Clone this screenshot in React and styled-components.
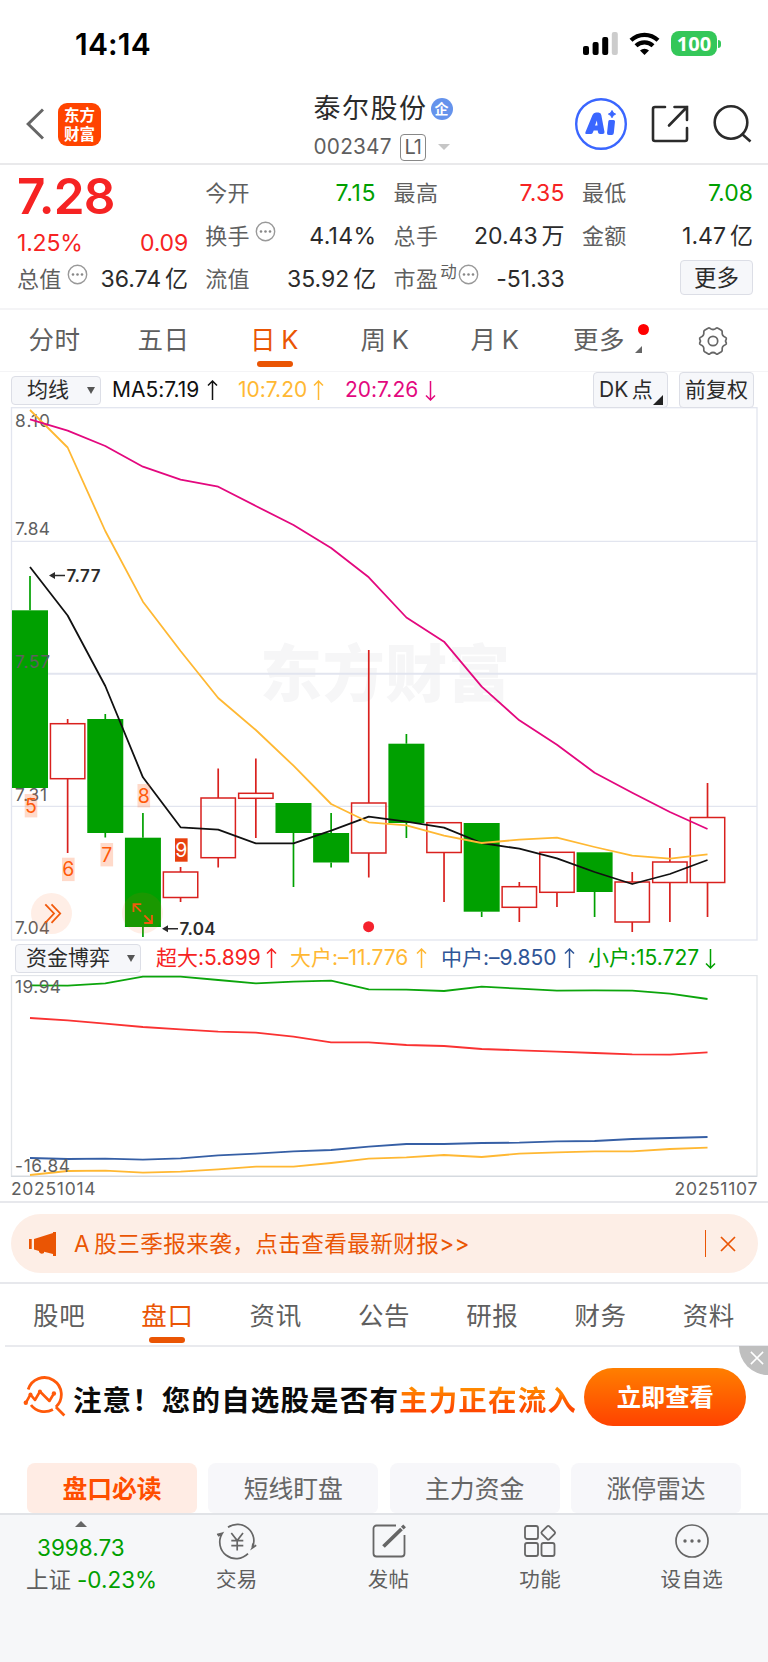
import React from 'react';
import styled, { createGlobalStyle } from 'styled-components';

const RED = '#f62323';
const GREEN = '#00a000';
const ORANGE = '#ea5504';
const YELLOW = '#ffb833';
const BLUE = '#2f5597';
const PINK = '#e3087e';
const GRAY = '#5f5f5f';
const DARK = '#2b2b2b';

const GlobalStyle = createGlobalStyle`
  * {
    box-sizing: border-box;
  }

  body {
    margin: 0;
    background: #fff;
    font-family: Inter, 'Noto Sans CJK SC', sans-serif;
    font-feature-settings: 'calt' 0;
    line-height: 1.2;
    word-spacing: -2.5px;
    color: ${DARK};
  }
`;

const Page = styled.div`
  width: 768px;
  height: 1662px;
  display: flex;
  flex-direction: column;
  overflow: hidden;
  white-space: nowrap;
`;

/** Status bar */
const StatusBar = styled.div`
  height: 84px;
  padding: 3px 48px 0 75px;
  display: flex;
  align-items: center;
  justify-content: space-between;
`;

const Clock = styled.span`
  font-size: 30px;
  font-weight: 600;
  letter-spacing: 0.2px;
  color: #000;
`;

const StatusIcons = styled.div`
  display: flex;
  align-items: center;
`;

const Battery = styled.span`
  width: 46px;
  height: 25px;
  margin-left: 11px;
  border-radius: 8px;
  background: #34c759;
  color: #fff;
  font: 700 20px/25px 'Open Sans', sans-serif;
  text-align: center;
`;

const BatteryTip = styled.span`
  width: 3px;
  height: 8px;
  margin: 0 -1px 0 1px;
  border-radius: 0 3px 3px 0;
  background: #34c759;
`;

/** Header */
const Header = styled.header`
  height: 81px;
  padding: 0 16px 0 26px;
  display: grid;
  grid-template-columns: 287.5px 1fr auto;
  align-items: center;
  border-bottom: 2px solid #e9e9eb;
`;

const HeaderLeft = styled.div`
  display: flex;
  align-items: center;
  gap: 14px;
`;

const HeaderTitle = styled.div`
  margin-top: 4px;
`;

const Logo = styled.div`
  width: 43px;
  height: 43px;
  padding-top: 2px;
  border-radius: 9px;
  background: #ff4400;
  color: #fff;
  font: 700 15.5px/19px 'Noto Sans CJK SC', sans-serif;
  text-align: center;
`;

const Title = styled.div`
  display: flex;
  align-items: center;
  height: 42px;
  font-size: 27px;
  letter-spacing: 1.5px;
`;

const Verified = styled.span`
  width: 22px;
  height: 22px;
  margin-left: 3px;
  border-radius: 50%;
  background: #6593ec;
  color: #fff;
  font-size: 14px;
  font-weight: 700;
  line-height: 22px;
  letter-spacing: 0;
  text-align: center;
`;

const SubTitle = styled.div`
  height: 34px;
  display: flex;
  align-items: center;
  font-size: 20.8px;
  letter-spacing: 0.2px;
  color: ${GRAY};
`;

const Level = styled.span`
  width: 26px;
  height: 27px;
  margin: 0 12px 0 8px;
  border: 1.5px solid #888;
  border-radius: 4px;
  font-size: 20px;
  line-height: 25px;
  letter-spacing: -1px;
  text-align: center;
`;

const Caret = styled.i`
  border: ${p => p.$size || 6}px solid transparent;
  border-top: ${p => p.$height || 6}px solid ${p => p.$color || '#c6c6c6'};
  border-bottom: 0;
`;

const HeaderRight = styled.div`
  display: flex;
  align-items: center;
  gap: 23.5px;
`;

/** Quote panel */
const Quote = styled.section`
  height: 145px;
  padding: 7px 15px 0 17px;
  display: grid;
  grid-template-columns: 171px 171px 171px 171px;
  column-gap: 17.3px;
  border-bottom: 2px solid #f4f4f6;
`;

const QuoteColumn = styled.div`
  display: flex;
  flex-direction: column;
`;

const Price = styled.div`
  height: 50px;
  color: ${RED};
  font-size: 49.5px;
  font-weight: 600;
  line-height: 48px;
  letter-spacing: -0.7px;
`;

const Stat = styled.div`
  height: ${p => p.$height || 43}px;
  display: flex;
  align-items: center;
  justify-content: space-between;
  font-size: 23px;
  letter-spacing: ${p => p.$spacing || 0}px;
  color: ${p => p.$color || DARK};
`;

const StatLabel = styled.span`
  display: flex;
  align-items: center;
  font-size: 22px;
  letter-spacing: 0.3px;
  color: ${GRAY};
`;

const Sup = styled.span`
  margin: -14px 0 0 2px;
  font-size: 16.5px;
`;

const HintSvg = styled.svg`
  margin: -10px 0 0 ${p => p.$gap}px;
`;

const MoreButton = styled.button`
  width: 73px;
  height: 35px;
  margin: -4px 0 0 auto;
  padding: 0;
  border: 1.5px solid #dcdee6;
  border-radius: 4px;
  background: #f6f7fa;
  color: ${DARK};
  font: 22.5px/32px Inter, 'Noto Sans CJK SC', sans-serif;
`;

/** Period tabs */
const Periods = styled.nav`
  height: 62px;
  display: grid;
  grid-template-columns: 109px 109px 113px 108px 112px 105px 114px;
  border-bottom: 1px solid #f4f4f6;
`;

const Tab = styled.div`
  position: relative;
  display: flex;
  align-items: center;
  justify-content: center;
  padding: ${p => p.$drop || 0}px ${p => p.$shift || 0}px 0 0;
  font-size: 25.5px;
  letter-spacing: 0.6px;
  color: ${p => (p.$active ? ORANGE : GRAY)};

  &::after {
    content: '';
    display: ${p => (p.$active ? 'block' : 'none')};
    position: absolute;
    left: calc(50% - 18px);
    bottom: ${p => p.$bar || 4}px;
    width: 36px;
    height: 6px;
    border-radius: 3px;
    background: ${ORANGE};
  }
`;

const RedDot = styled.i`
  position: absolute;
  top: 14px;
  right: 7px;
  width: 11px;
  height: 11px;
  border-radius: 50%;
  background: #ff0000;
`;

const Corner = styled.i`
  position: absolute;
  right: ${p => p.$right}px;
  bottom: ${p => p.$bottom}px;
  border-left: ${p => p.$size}px solid transparent;
  border-bottom: ${p => p.$size}px solid ${p => p.$color};
`;

/** Indicator bars above both charts */
const Indicators = styled.div`
  height: ${p => p.$height}px;
  padding: ${p => p.$drop || 0}px 14px 0 ${p => p.$left}px;
  display: flex;
  align-items: center;
  font-size: 21px;
`;

const Select = styled.div`
  width: ${p => p.$width}px;
  height: 29px;
  padding: 0 5px 0 ${p => p.$pad}px;
  display: flex;
  align-items: center;
  justify-content: space-between;
  border: 1.5px solid #dcdee6;
  border-radius: 4px;
  background: #f6f7fa;
  font-size: 21px;
`;

const Legend = styled.span`
  display: flex;
  align-items: center;
  width: ${p => p.$width}px;
  margin-left: ${p => p.$gap}px;
  color: ${p => p.$color};

  svg {
    margin-left: auto;
  }
`;

const ToolButton = styled.div`
  position: relative;
  width: 75px;
  height: 36px;
  margin-left: ${p => p.$gap};
  padding-left: 5px;
  border: 1.5px solid #dcdee6;
  border-radius: 4px;
  background: #f6f7fa;
  font-size: 21px;
  line-height: 34px;
`;

const Chart = styled.svg`
  display: block;
  flex: none;
`;

const Dates = styled.div`
  height: 26px;
  padding: 0 10px 2px 11px;
  display: flex;
  align-items: center;
  justify-content: space-between;
  border-bottom: 2px solid #e7e8ec;
  font-size: 17.5px;
  letter-spacing: 0.7px;
  color: ${GRAY};
`;

/** Notice */
const NoticeWrap = styled.div`
  height: 81px;
  padding: 11px 10px 0 11px;
  border-bottom: 2px solid #e7e8ec;
`;

const Notice = styled.div`
  height: 59px;
  padding: 0 22px 0 18px;
  display: flex;
  align-items: center;
  border-radius: 30px;
  background: #fdeee6;
  color: ${ORANGE};
  font-size: 22.6px;
`;

const NoticeText = styled.span`
  margin-left: 18px;
  flex: 1;
  letter-spacing: 0.4px;
`;

const Divider = styled.i`
  width: 1.5px;
  height: 27px;
  margin-right: 14px;
  background: ${ORANGE};
`;

const Sections = styled.nav`
  height: 63px;
  margin-left: 5px;
  padding-right: 5px;
  display: grid;
  grid-template-columns: repeat(7, 1fr);
  border-bottom: 2px solid #e9eaee;
`;

/** Banner */
const Banner = styled.div`
  position: relative;
  height: 106px;
  padding: 0 22px 6px 23px;
  display: flex;
  align-items: center;
`;

const BannerText = styled.div`
  width: 513px;
  margin-left: 6px;
  padding-top: 3px;
  color: #0b0b0b;
  font: 700 28.5px/60px 'Noto Sans CJK SC', sans-serif;
  letter-spacing: 1.15px;
`;

const Accent = styled.span`
  background: linear-gradient(180deg, #ff8a00 25%, #ff4800 75%);
  background-clip: text;
  -webkit-background-clip: text;
  color: transparent;
`;

const BannerButton = styled.div`
  width: 162px;
  height: 58px;
  border-radius: 29px;
  background: linear-gradient(180deg, #ff7f00, #ff4200);
  color: #fff;
  font: 700 24.3px/55px 'Noto Sans CJK SC', sans-serif;
  text-align: center;
`;

const BannerClose = styled.div`
  position: absolute;
  top: -1px;
  right: 0;
  width: 29px;
  height: 29px;
  padding: 4px 0 0 11px;
  border-bottom-left-radius: 29px;
  background: #bfbfbf;
`;

const Pills = styled.div`
  height: 60px;
  padding: 10px 27px 0;
  display: grid;
  grid-template-columns: repeat(4, 1fr);
  gap: 11.3px;
`;

const Pill = styled.div`
  height: 50px;
  border-radius: 8px 8px 6px 6px;
  background: ${p => (p.$active ? '#ffece4' : '#f7f7fa')};
  color: ${p => (p.$active ? '#ff4e00' : '#666')};
  font-size: 24.8px;
  font-weight: ${p => (p.$active ? 700 : 400)};
  line-height: 53px;
  text-align: center;
`;

/** Bottom bar */
const BottomBar = styled.footer`
  flex: 1;
  padding-left: 8px;
  display: grid;
  grid-template-columns: 153px repeat(4, 151.7px);
  border-top: 2px solid #e1e3e7;
  background: #f6f7f9;
`;

const BottomItem = styled.div`
  display: flex;
  flex-direction: column;
  align-items: center;
  padding-top: 8px;
  font-size: 20.5px;
  letter-spacing: 0.4px;
  color: ${GRAY};

  svg {
    margin-bottom: 9px;
    overflow: visible;
  }
`;

const MarketIndex = styled.div`
  padding-top: 6px;
  display: flex;
  flex-direction: column;
  font-size: 22.5px;
  line-height: 31.5px;
  color: ${GRAY};
`;

const IndexArrow = styled.i`
  width: 0;
  margin: 0 0 5px 67px;
  border: 6px solid transparent;
  border-bottom-color: #666;
  border-top: 0;
`;

const IndexValue = styled.span`
  margin-left: 29px;
  color: ${GREEN};
`;

const IndexChange = styled.span`
  margin-left: 18px;

  b {
    margin-left: 6px;
    font-weight: 400;
    color: ${GREEN};
  }
`;

const Hint = ({ gap = 5 }) => (
  <HintSvg $gap={gap} width="21" height="21" viewBox="0 0 21 21">
    <circle cx="10.5" cy="10.5" r="9.2" fill="none" stroke="#999" strokeWidth="1.4" />
    {[6, 10.5, 15].map(x => (
      <circle key={x} cx={x} cy="10.5" r="1.3" fill="#888" />
    ))}
  </HintSvg>
);

const Arrow = ({ down }) => (
  <svg width="11" height="21" viewBox="0 0 11 21" fill="none" stroke="currentColor" strokeWidth="1.5">
    <path d={down ? 'M5.5 1v19M1 15.5 5.5 20l4.5-4.5' : 'M5.5 20V1M1 5.5 5.5 1 10 5.5'} />
  </svg>
);

/** Chart data, one entry per trading day */
const STEP = 37.64;
const dayX = i => 30 + i * STEP;

// high, body top, body bottom, low, rising
const CANDLES = [
  [576, 610.3, 788, 788, 0],
  [719, 723.7, 778.7, 853, 1],
  [714, 719, 833, 837.5, 0],
  [813, 837.7, 927, 937, 0],
  [867, 872, 897.5, 902, 1],
  [768.5, 798, 857.7, 867.5, 1],
  [758.5, 793.3, 798.3, 838, 1],
  [803, 803, 833, 887, 0],
  [813, 833, 862.5, 867.5, 0],
  [650, 803, 853, 877.5, 1],
  [734, 743.7, 823, 838, 0],
  [822.7, 822.7, 852.5, 902, 1],
  [823, 823, 911.7, 917, 0],
  [882, 886.7, 907.3, 922, 1],
  [852.3, 852.3, 892.3, 907, 1],
  [852.3, 852.3, 892, 917, 0],
  [872, 882, 922, 932, 1],
  [848, 862, 882.5, 922, 1],
  [783, 817.5, 882.5, 917, 1],
];

const MA5 = [567, 615.5, 686, 777.3, 827.3, 829.7, 843.3, 843.3, 830.7, 816.7, 821.7, 827.7, 843, 848.7, 858.3, 872, 884, 874, 860];
const MA10 = [410, 447.5, 531, 601.7, 651, 698, 730, 765.7, 804, 822.3, 825.3, 835.7, 843, 839.7, 837.7, 847, 855.7, 858.7, 854.3];
const MA20 = [419.3, 430.7, 446, 466.7, 479.7, 486.7, 506, 525, 548, 577.3, 617.5, 641.7, 686.7, 720.3, 744.7, 772.7, 792.7, 812, 829];

const FLOW_SMALL = [985.3, 985.7, 983.3, 976.7, 976.7, 980, 983.3, 981.7, 980.7, 989.3, 989.7, 991, 986.7, 988.7, 990.7, 990.3, 990.7, 993.7, 999];
const FLOW_SUPER = [1018, 1020.3, 1023.7, 1027, 1029.3, 1031.7, 1032.7, 1036.7, 1042.3, 1042.3, 1045, 1046, 1049, 1050.3, 1051.7, 1053, 1054.3, 1054.7, 1052.3];
const FLOW_MIDDLE = [1158, 1159, 1158.7, 1159.7, 1158.3, 1155.3, 1153.7, 1151.3, 1150, 1146.7, 1144, 1144, 1143, 1142.7, 1141.3, 1141, 1139, 1138, 1137];
const FLOW_LARGE = [1175, 1171, 1170.7, 1172.7, 1171.7, 1169.3, 1166.7, 1166.7, 1163, 1158.7, 1157.3, 1155, 1157, 1153.7, 1152.3, 1151.3, 1151.3, 1149, 1147.7];

// label, x, y of each nine-turn mark
const MARKS = [
  ['5', 24.7, 794],
  ['6', 62, 857.7],
  ['7', 100.5, 843],
  ['8', 137.5, 784],
  ['9', 175, 838.3],
];

const Line = ({ data, color, width = 1.8 }) => (
  <polyline
    points={data.map((y, i) => `${dayX(i)},${y}`).join(' ')}
    fill="none"
    stroke={color}
    strokeWidth={width}
    strokeLinejoin="round"
  />
);

const Candle = ({ x, data: [high, top, bottom, low, rising] }) => {
  const color = rising ? '#d9211e' : GREEN;
  return (
    <g stroke={color} strokeWidth="1.7">
      {high < top && <path d={`M${x} ${high}V${top}`} />}
      {low > bottom && <path d={`M${x} ${bottom}V${low}`} />}
      {rising ? (
        <rect x={x - 17.2} y={top} width="34.4" height={bottom - top} fill="none" strokeWidth="1.5" />
      ) : (
        <rect x={x - 18} y={top} width="36" height={bottom - top} fill={color} stroke="none" />
      )}
    </g>
  );
};

const AxisLabel = ({ y, width = 35, children }) => (
  <text x="15" y={y} fontSize="17.3" fill={GRAY} textLength={width}>
    {children}
  </text>
);

const PriceChart = () => (
  <Chart width="768" height="534" viewBox="0 407 768 534">
    <text x="260" y="697" fontSize="62" fontWeight="900" fill="#f6f6f7" textLength="250">
      东方财富
    </text>
    <g fill="none" stroke="#e2e5ef" strokeWidth="1.3">
      <rect x="11.5" y="407.7" width="745.5" height="532.3" />
      <path d="M11 541.3H757M11 806.3H757" />
      <path d="M11 673.7H757" strokeWidth="2" />
    </g>
    {CANDLES.map((c, i) => (
      <Candle key={i} x={dayX(i)} data={c} />
    ))}
    <AxisLabel y="427">8.10</AxisLabel>
    <AxisLabel y="534.5">7.84</AxisLabel>
    <AxisLabel y="667.5">7.57</AxisLabel>
    <AxisLabel y="800.5" width="32">7.31</AxisLabel>
    <AxisLabel y="933.5">7.04</AxisLabel>
    <Line data={MA5} color="#111" />
    <Line data={MA10} color={YELLOW} />
    <Line data={MA20} color={PINK} />
    {MARKS.map(([label, x, y]) => (
      <g key={label}>
        <rect
          x={x}
          y={y}
          width="12.6"
          height="23.4"
          fill={label === '9' ? '#e8400f' : '#ff6a2b'}
          fillOpacity={label === '9' ? 1 : 0.25}
        />
        <text x={x + 6.3} y={y + 18.6} fontSize="19.5" textAnchor="middle" fill={label === '9' ? '#fff' : '#ff5a0a'}>
          {label}
        </text>
      </g>
    ))}
    <g fill="none" stroke={DARK} strokeWidth="1.6">
      <path d="M51 575.5H65M164 928.7H178" />
      <path d="M49 575.5l6-3.5v7zM162 928.7l6-3.5v7z" fill={DARK} stroke="none" />
    </g>
    <g fontSize="17" fontWeight="600" fill={DARK}>
      <text x="66.5" y="581.6" textLength="34">
        7.77
      </text>
      <text x="179.5" y="935" textLength="36">
        7.04
      </text>
    </g>
    <circle cx="368.6" cy="926.7" r="5.5" fill="#f5222d" />
    <circle cx="51.5" cy="913.5" r="20.5" fill="#ff5a0a" fillOpacity="0.1" />
    <circle cx="142.5" cy="913" r="20.5" fill="#ff5a0a" fillOpacity="0.1" />
    <g fill="none" stroke="#f25a0c" strokeWidth="1.8">
      <path d="M45.3 904.3 54 913.5l-8.7 9.3M51.5 904.3l8.7 9.2-8.7 9.3" />
      <path d="M133.5 912v-7.8h7.8M133.5 904.2l7.5 7.5M152 915v8h-7.8M152 923l-7.6-7.6" />
    </g>
  </Chart>
);

const FlowChart = () => (
  <Chart width="768" height="202" viewBox="0 975 768 202">
    <rect x="11.5" y="975.5" width="745.5" height="200.7" fill="none" stroke="#e2e5e9" strokeWidth="1.3" />
    <path d="M11 1176.4H757" stroke="#d5dae0" strokeWidth="1.3" />
    <Line data={FLOW_SMALL} color="#0ca50c" />
    <Line data={FLOW_SUPER} color="#fa3232" />
    <Line data={FLOW_MIDDLE} color="#365fa5" />
    <Line data={FLOW_LARGE} color={YELLOW} />
    <AxisLabel y="993" width="46">
      19.94
    </AxisLabel>
    <AxisLabel y="1172" width="55">
      -16.84
    </AxisLabel>
  </Chart>
);

const StatusGlyphs = () => (
  <svg width="77" height="26" viewBox="0 0 77 26">
    <rect x="0" y="15" width="6" height="9" rx="2" />
    <rect x="9.6" y="11" width="6" height="13" rx="2" />
    <rect x="19.2" y="6" width="6" height="18" rx="2" />
    <rect x="28.8" y="1" width="6" height="23" rx="2" fill="#ccc" />
    <g fill="none" stroke="#000" strokeWidth="4.2">
      <path d="M48 9.3a19.5 19.5 0 0 1 27 0" />
      <path d="M53 14.8a12.3 12.3 0 0 1 17 0" />
    </g>
    <path d="M57 19.6a6.7 6.7 0 0 1 9 0L61.5 24z" />
  </svg>
);

const BackIcon = () => (
  <svg width="18" height="32" viewBox="0 0 18 32" fill="none" stroke="#666" strokeWidth="3">
    <path d="M17 1.5 2.2 16 17 30.5" />
  </svg>
);

const AiIcon = () => (
  <svg width="52" height="52" viewBox="0 0 52 52" fill="#3a66ff">
    <circle cx="26" cy="26" r="24.8" fill="none" stroke="#3a66ff" strokeWidth="2.4" />
    <path
      d="M10.5 34 17.5 17q1-2.500 3.500-2.500h2.500q2.500 0 2.800 2.500L29.500 34q.3 2-2 2h-2.500q-1.700 0-2-1.700l-.3-1.800h-4l-.8 2q-.6 1.500-2.200 1.500h-4q-2 0-1.200-2zM20 27.500h2.500l-.6-5z"
      fillRule="evenodd"
    />
    <path d="M34.5 22h4q1.600 0 1.500 1.500L38.800 35q-.2 2-2 2h-3q-2 0-1.800-2L33.300 23.500q.1-1.500 1.200-1.500z" />
    <path d="M37 12.500q1 2.900 3.600 3.600-2.600.8-3.600 3.600-1-2.800-3.600-3.600 2.600-.7 3.600-3.600z" stroke="#3a66ff" />
  </svg>
);

const ShareIcon = () => (
  <svg width="38" height="38" viewBox="0 0 38 38" fill="none" stroke="#2b2b2b" strokeWidth="2.6" strokeLinecap="round">
    <path d="M14 2H4a2 2 0 0 0-2 2v30a2 2 0 0 0 2 2h30a2 2 0 0 0 2-2V23M23.5 2H36v13M36 2 18 20.5" />
  </svg>
);

const SearchIcon = () => (
  <svg width="40" height="40" viewBox="0 0 40 40" fill="none" stroke="#2b2b2b" strokeWidth="2.6">
    <circle cx="19" cy="18.5" r="16.3" />
    <path d="M30 30 38.5 37.5" />
  </svg>
);

const GearIcon = () => (
  <svg width="30" height="30" viewBox="0 0 30 30" fill="none" stroke="#666" strokeWidth="1.7" strokeLinejoin="round">
    <path d="M10 2.3Q11 1.6 12 2.3Q15 4.7 18 2.3Q19 1.6 20 2.3L23.4 4.3Q24.4 5 24.2 6.2Q23.7 10 27.3 11.3Q28.8 12 28.3 13.2Q26.8 15 28.3 16.8Q28.8 18 27.3 18.7Q23.7 20 24.2 23.8Q24.4 25 23.4 25.7L20 27.7Q19 28.4 18 27.7Q15 25.3 12 27.7Q11 28.4 10 27.7L6.6 25.7Q5.6 25 5.8 23.8Q6.3 20 2.7 18.7Q1.2 18 1.7 16.8Q3.2 15 1.7 13.2Q1.2 12 2.7 11.3Q6.3 10 5.8 6.2Q5.6 5 6.6 4.3Z" />
    <circle cx="15" cy="15" r="4.7" />
  </svg>
);

const HornIcon = () => (
  <svg width="27" height="24" viewBox="0 0 27 24" fill={ORANGE}>
    <path d="M0 7h2.7v10H0zM5 7 24 1V0h3v24h-3v-2l-9-2.3V21q-3 2-5-1v-1l-5-1.5z" />
  </svg>
);

const CrossIcon = ({ size = 16, color = ORANGE }) => (
  <svg width={size} height={size} viewBox="0 0 16 16" stroke={color} strokeWidth="1.7">
    <path d="M1 1l14 14M15 1 1 15" />
  </svg>
);

const ScanIcon = () => (
  <svg width="44" height="42" viewBox="0 0 44 42" fill="none" stroke="#ff5a0a" strokeWidth="2.8">
    <path d="M5.2 13.5A17 17 0 1 1 33 31M30 33.5A17 17 0 0 1 8 29M33 31l8.5 8.5" />
    <path d="M2.8 26.8 7.5 18.5 12 24 17 15.5 26.5 25 31 17.5" strokeWidth="2.6" strokeLinejoin="round" />
    <g fill="#ff5a0a" stroke="none">
      <circle cx="2.8" cy="26.8" r="2.2" />
      <circle cx="7.5" cy="18.5" r="2" />
      <circle cx="17" cy="15.5" r="2" />
      <circle cx="31" cy="17.5" r="2.2" />
    </g>
  </svg>
);

const TradeIcon = () => (
  <svg width="42" height="36" viewBox="-1 0 42 36" fill="none" stroke="#666" strokeWidth="1.7">
    <path d="M11 4.2A16.5 16.5 0 0 1 35.2 25L39.2 22.3M35.2 25 36 20.5" />
    <path d="M31 30.7A16.5 16.5 0 0 1 5 10.8L1 13M0 11.5 6 10.2" />
    <path d="M14.3 10l5.9 7.5L26 10M20.2 17.5V27.5M14.3 17.7h12M14.3 22.7h12" />
  </svg>
);

const PostIcon = () => (
  <svg width="36" height="36" viewBox="0 0 36 36" fill="none" stroke="#666" strokeWidth="1.8">
    <path d="M25 2.5H5.5a3 3 0 0 0-3 3v25a3 3 0 0 0 3 3h25a3 3 0 0 0 3-3V12" />
    <path d="M12.5 23.5 30.5 6M31.3 5.2l2.3-2.3" strokeWidth="3.8" />
  </svg>
);

const GridIcon = () => (
  <svg width="34" height="36" viewBox="0 0 34 36" fill="none" stroke="#666" strokeWidth="1.8">
    <rect x="2" y="3" width="13" height="13" rx="2" />
    <rect x="2" y="20" width="13" height="13" rx="2" />
    <rect x="18.5" y="20" width="13" height="13" rx="2" />
    <rect x="20" y="4.5" width="10.5" height="10.5" rx="1.5" transform="rotate(45 25.25 9.75)" />
  </svg>
);

const DotsIcon = () => (
  <svg width="36" height="36" viewBox="0 0 36 36">
    <circle cx="18" cy="18" r="16" fill="none" stroke="#666" strokeWidth="1.7" />
    {[11, 18, 25].map(x => (
      <circle key={x} cx={x} cy="18" r="1.7" fill="#666" />
    ))}
  </svg>
);

const SECTIONS = ['股吧', '盘口', '资讯', '公告', '研报', '财务', '资料'];
const PILLS = ['盘口必读', '短线盯盘', '主力资金', '涨停雷达'];

const App = () => (
  <Page>
    <GlobalStyle />

    <StatusBar>
      <Clock>14:14</Clock>
      <StatusIcons>
        <StatusGlyphs />
        <Battery>100</Battery>
        <BatteryTip />
      </StatusIcons>
    </StatusBar>

    <Header>
      <HeaderLeft>
        <BackIcon />
        <Logo>
          东方
          <br />
          财富
        </Logo>
      </HeaderLeft>
      <HeaderTitle>
        <Title>
          泰尔股份<Verified>企</Verified>
        </Title>
        <SubTitle>
          002347<Level>L1</Level>
          <Caret />
        </SubTitle>
      </HeaderTitle>
      <HeaderRight>
        <AiIcon />
        <ShareIcon />
        <SearchIcon />
      </HeaderRight>
    </Header>

    <Quote>
      <QuoteColumn>
        <Price>7.28</Price>
        <Stat $height={43} $color={RED} $spacing={-0.2}>
          <span>1.25%</span>
          <span>0.09</span>
        </Stat>
        <Stat $height={29}>
          <StatLabel>
            总值
            <Hint />
          </StatLabel>
          36.74 亿
        </Stat>
      </QuoteColumn>
      <QuoteColumn>
        <Stat $color={GREEN} $spacing={0.7}>
          <StatLabel>今开</StatLabel>
          7.15
        </Stat>
        <Stat $spacing={0.3}>
          <StatLabel>
            换手
            <Hint />
          </StatLabel>
          4.14%
        </Stat>
        <Stat>
          <StatLabel>流值</StatLabel>
          35.92 亿
        </Stat>
      </QuoteColumn>
      <QuoteColumn>
        <Stat $color={RED} $spacing={0.2}>
          <StatLabel>最高</StatLabel>
          7.35
        </Stat>
        <Stat>
          <StatLabel>总手</StatLabel>
          20.43 万
        </Stat>
        <Stat>
          <StatLabel>
            市盈
            <Sup>动</Sup>
            <Hint gap={1} />
          </StatLabel>
          -51.33
        </Stat>
      </QuoteColumn>
      <QuoteColumn>
        <Stat $color={GREEN}>
          <StatLabel>最低</StatLabel>
          7.08
        </Stat>
        <Stat>
          <StatLabel>金额</StatLabel>
          1.47 亿
        </Stat>
        <Stat>
          <MoreButton>更多</MoreButton>
        </Stat>
      </QuoteColumn>
    </Quote>

    <Periods>
      <Tab>分时</Tab>
      <Tab>五日</Tab>
      <Tab $active>日 K</Tab>
      <Tab>周 K</Tab>
      <Tab>月 K</Tab>
      <Tab $shift={9}>
        更多
        <RedDot />
        <Corner $right={14} $bottom={18} $size={7} $color="#666" />
      </Tab>
      <Tab>
        <GearIcon />
      </Tab>
    </Periods>

    <Indicators $height={35} $left={11} $drop={1}>
      <Select $width={90} $pad={15}>
        均线
        <Caret $size={4.5} $height={7.5} $color="#555" />
      </Select>
      <Legend $width={106} $gap={11} $color="#111">
        MA5:7.19
        <Arrow />
      </Legend>
      <Legend $width={86} $gap={20} $color={YELLOW}>
        10:7.20
        <Arrow />
      </Legend>
      <Legend $width={91} $gap={21} $color={PINK}>
        20:7.26
        <Arrow down />
      </Legend>
      <ToolButton $gap="auto">
        DK 点
        <Corner $right={4} $bottom={2} $size={10} $color="#222" />
      </ToolButton>
      <ToolButton $gap="11px">前复权</ToolButton>
    </Indicators>

    <PriceChart />

    <Indicators $height={34} $left={15}>
      <Select $width={126} $pad={10}>
        资金博弈
        <Caret $size={4.5} $height={7.5} $color="#555" />
      </Select>
      <Legend $width={121} $gap={15} $color={RED}>
        超大:5.899
        <Arrow />
      </Legend>
      <Legend $width={137} $gap={13} $color={YELLOW}>
        大户:–11.776
        <Arrow />
      </Legend>
      <Legend $width={134} $gap={14} $color={BLUE}>
        中户:–9.850
        <Arrow />
      </Legend>
      <Legend $width={128} $gap={13} $color={GREEN}>
        小户:15.727
        <Arrow down />
      </Legend>
    </Indicators>

    <FlowChart />

    <Dates>
      <span>20251014</span>
      <span>20251107</span>
    </Dates>

    <NoticeWrap>
      <Notice>
        <HornIcon />
        <NoticeText>A 股三季报来袭，点击查看最新财报&gt;&gt;</NoticeText>
        <Divider />
        <CrossIcon />
      </Notice>
    </NoticeWrap>

    <Sections>
      {SECTIONS.map(name => (
        <Tab key={name} $active={name === '盘口'} $bar={2} $drop={4}>
          {name}
        </Tab>
      ))}
    </Sections>

    <Banner>
      <ScanIcon />
      <BannerText>
        注意！您的自选股是否有<Accent>主力正在流入</Accent>
      </BannerText>
      <BannerButton>立即查看</BannerButton>
      <BannerClose>
        <CrossIcon size={14} color="#fff" />
      </BannerClose>
    </Banner>

    <Pills>
      {PILLS.map((name, i) => (
        <Pill key={name} $active={i === 0}>
          {name}
        </Pill>
      ))}
    </Pills>

    <BottomBar>
      <MarketIndex>
        <IndexArrow />
        <IndexValue>3998.73</IndexValue>
        <IndexChange>
          上证<b>-0.23%</b>
        </IndexChange>
      </MarketIndex>
      <BottomItem>
        <TradeIcon />
        交易
      </BottomItem>
      <BottomItem>
        <PostIcon />
        发帖
      </BottomItem>
      <BottomItem>
        <GridIcon />
        功能
      </BottomItem>
      <BottomItem>
        <DotsIcon />
        设自选
      </BottomItem>
    </BottomBar>
  </Page>
);

export default App;
